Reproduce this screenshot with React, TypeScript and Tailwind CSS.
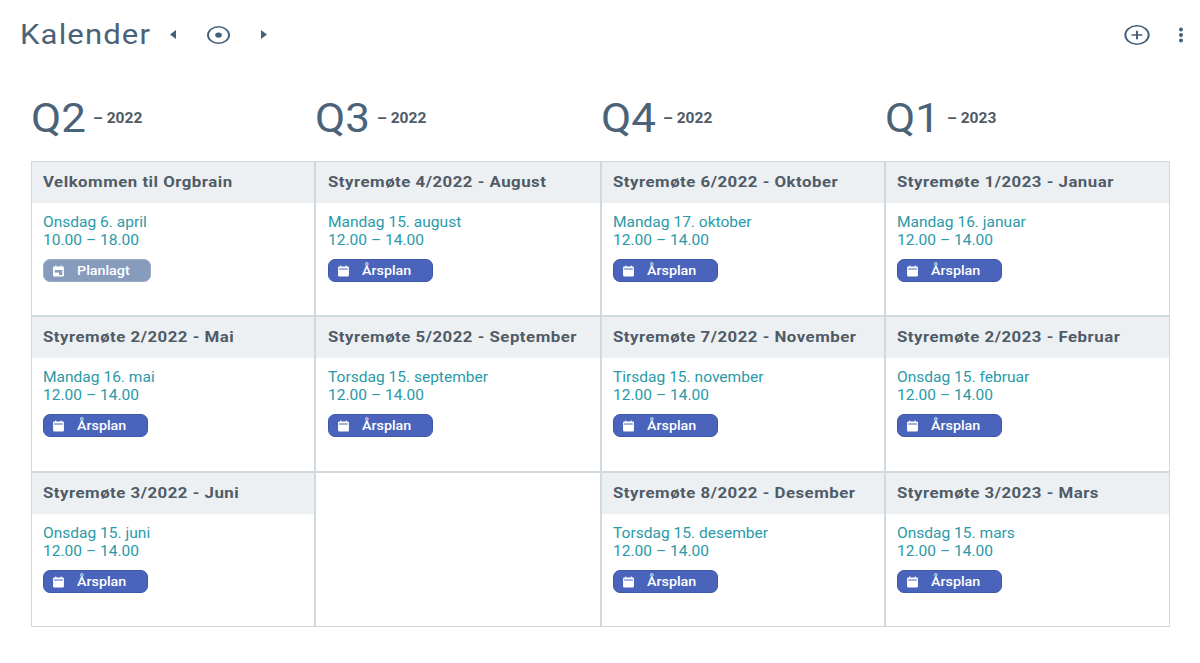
import { CirclePlus } from 'lucide-react';

type Meeting = {
    title: string;
    date: string;
    time: string;
    planned?: boolean;
};

const quarters = [
    { name: 'Q2', year: '2022' },
    { name: 'Q3', year: '2022' },
    { name: 'Q4', year: '2022' },
    { name: 'Q1', year: '2023' },
];

const meetings: (Meeting | null)[] = [
    { title: 'Velkommen til Orgbrain', date: 'Onsdag 6. april', time: '10.00 – 18.00', planned: true },
    { title: 'Styremøte 4/2022 - August', date: 'Mandag 15. august', time: '12.00 – 14.00' },
    { title: 'Styremøte 6/2022 - Oktober', date: 'Mandag 17. oktober', time: '12.00 – 14.00' },
    { title: 'Styremøte 1/2023 - Januar', date: 'Mandag 16. januar', time: '12.00 – 14.00' },
    { title: 'Styremøte 2/2022 - Mai', date: 'Mandag 16. mai', time: '12.00 – 14.00' },
    { title: 'Styremøte 5/2022 - September', date: 'Torsdag 15. september', time: '12.00 – 14.00' },
    { title: 'Styremøte 7/2022 - November', date: 'Tirsdag 15. november', time: '12.00 – 14.00' },
    { title: 'Styremøte 2/2023 - Februar', date: 'Onsdag 15. februar', time: '12.00 – 14.00' },
    { title: 'Styremøte 3/2022 - Juni', date: 'Onsdag 15. juni', time: '12.00 – 14.00' },
    null,
    { title: 'Styremøte 8/2022 - Desember', date: 'Torsdag 15. desember', time: '12.00 – 14.00' },
    { title: 'Styremøte 3/2023 - Mars', date: 'Onsdag 15. mars', time: '12.00 – 14.00' },
];

function CalendarIcon({ planned }: { planned?: boolean }) {
    return (
        <svg className="w-[13px] h-3 shrink-0" viewBox="0 0 12 12" preserveAspectRatio="none" fill="white">
            <path d="M3 0.5h1v1h4v-1h1v1h1a1 1 0 0 1 1 1v8a1 1 0 0 1-1 1H2a1 1 0 0 1-1-1v-8a1 1 0 0 1 1-1h1z" />
            {planned ? (
                <path d="M2.5 5h7v5h-3V7.5h-4z" fill="#879cbd" />
            ) : (
                <rect x="2" y="3.5" width="8" height="1" fill="#4a63bb" />
            )}
        </svg>
    );
}

function MeetingCell({ meeting, second }: { meeting: Meeting | null; second: boolean }) {
    if (!meeting) return <div className="bg-white border border-[#d0dade] h-full" />;

    return (
        <div className="bg-white border border-[#d0dade] h-full">
            <div className={`h-[41px] bg-[#edf0f3] flex items-center ${second ? 'pl-3' : 'pl-[11px]'}`}>
                <h3 className="origin-left scale-x-[1.12] text-[15px] font-bold tracking-[0.45px] text-[#4f5b66] whitespace-nowrap">{meeting.title}</h3>
            </div>
            <div className={`pt-[10px] ${second ? 'pl-3' : 'pl-[11px]'}`}>
                <p className="origin-left scale-x-[1.11] text-[14px] leading-[18px] text-[#2a9aa8]">{meeting.date}</p>
                <p className="origin-left scale-x-[1.11] text-[14px] leading-[18px] text-[#2a9aa8]">{meeting.time}</p>
                <div
                    className={`mt-[10px] h-[23px] rounded-[7px] border flex items-center pl-2 gap-3 text-[13px] font-medium text-white ${
                        meeting.planned ? 'w-[108px] bg-[#879cbd] border-[#9aadc8]' : 'w-[105px] bg-[#4a63bb] border-[#3f57ab]'
                    }`}
                >
                    <CalendarIcon planned={meeting.planned} />
                    <span className="origin-left scale-x-[1.1]">{meeting.planned ? 'Planlagt' : 'Årsplan'}</span>
                </div>
            </div>
        </div>
    );
}

export default function App() {
    return (
        <div className="w-[1200px] h-[663px] bg-white overflow-hidden font-['Roboto',sans-serif]">
            {/* Top bar */}
            <header className="h-[69px] pl-5 pr-4 flex items-center justify-between text-[#44617a]">
                <div className="flex items-center">
                    <h1 className="w-[131px] origin-left scale-x-[1.11] text-[28px] tracking-[1px] text-[#4a6378] whitespace-nowrap">Kalender</h1>
                    <svg className="ml-[19px] w-[6px] h-[9px]" viewBox="0 0 6 9" fill="currentColor">
                        <path d="M6 0v9L0 4.5z" />
                    </svg>
                    <svg className="ml-[31px] w-[23px] h-[18px]" viewBox="0 0 24 24" preserveAspectRatio="none" fill="none" stroke="currentColor" strokeWidth="2">
                        <circle cx="12" cy="12" r="11" />
                        <circle cx="12" cy="12" r="3.5" fill="currentColor" stroke="none" />
                    </svg>
                    <svg className="ml-[31px] w-[6px] h-[9px]" viewBox="0 0 6 9" fill="currentColor">
                        <path d="M0 0v9L6 4.5z" />
                    </svg>
                </div>
                <div className="flex items-center gap-[27px]">
                    <CirclePlus className="w-[28px] h-[22px]" strokeWidth={1.7} preserveAspectRatio="none" />
                    <svg className="w-[6px] h-[16px]" viewBox="0 0 6 16" fill="currentColor">
                        <circle cx="3" cy="2.5" r="2" />
                        <circle cx="3" cy="8" r="2" />
                        <circle cx="3" cy="13.5" r="2" />
                    </svg>
                </div>
            </header>

            <div className="pl-[31px] pr-[30px]">
                {/* Quarter headings */}
                <div className="h-[92px] pt-[25px] grid grid-cols-[284px_286px_284px_285px]">
                    {quarters.map((q) => (
                        <div key={q.name} className="flex items-center h-[47px]">
                            <span className="w-[54px] origin-left scale-x-[1.1] text-[40px] leading-[47px] pt-[1px] text-[#4a6378]">{q.name}</span>
                            <span className="ml-2 pt-[2px] origin-left scale-x-[1.11] text-[14px] font-bold text-[#4f5b66]">– {q.year}</span>
                        </div>
                    ))}
                </div>

                {/* Meetings grid */}
                <div className="grid grid-cols-[284px_286px_284px_285px] grid-rows-[155px_156px_155px]">
                    {meetings.map((m, i) => (
                        <MeetingCell key={i} meeting={m} second={i % 4 === 1} />
                    ))}
                </div>
            </div>
        </div>
    );
}
